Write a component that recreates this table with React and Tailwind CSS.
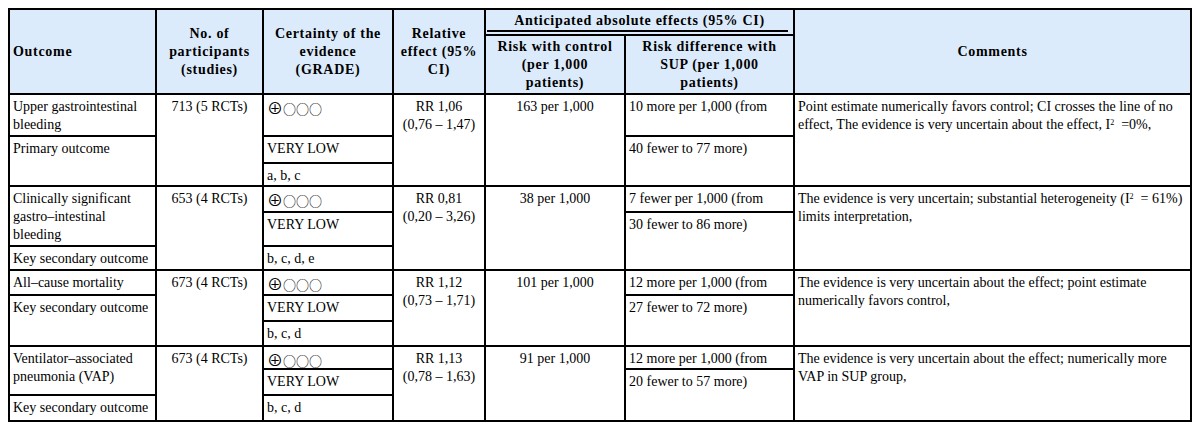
import React from "react"

const head = "bg-[#dcebfb] font-bold text-[14px] tracking-[0.7px] leading-[18px] flex items-center"
const body = "bg-white text-[14px] leading-[18px] px-[3px] pt-[3px] whitespace-nowrap"
const grade = "font-['Noto_Sans_CJK_KR','DejaVu_Sans',sans-serif] text-[13px] leading-[18px]"

const groups = [
  {
    outcome: ["Upper gastrointestinal", "bleeding"],
    topSpan: 1,
    role: "Primary outcome",
    n: "713 (5 RCTs)",
    cert: "a, b, c",
    rr: ["RR 1,06", "(0,76 – 1,47)"],
    ctrl: "163 per 1,000",
    diff: ["10 more per 1,000 (from", "40 fewer to 77 more)"],
    comment: [
      "Point estimate numerically favors control; CI crosses the line of no",
      <>effect, The evidence is very uncertain about the effect, I<sup className="text-[8px]">2</sup>&nbsp;&nbsp;=0%,</>,
    ],
  },
  {
    outcome: ["Clinically significant", "gastro–intestinal", "bleeding"],
    topSpan: 2,
    role: "Key secondary outcome",
    n: "653 (4 RCTs)",
    cert: "b, c, d, e",
    rr: ["RR 0,81", "(0,20 – 3,26)"],
    ctrl: "38 per 1,000",
    diff: ["7 fewer per 1,000 (from", "30 fewer to 86 more)"],
    comment: [
      <>The evidence is very uncertain; substantial heterogeneity (I<sup className="text-[8px]">2</sup>&nbsp;&nbsp;= 61%)</>,
      "limits interpretation,",
    ],
  },
  {
    outcome: ["All–cause mortality"],
    topSpan: 1,
    role: "Key secondary outcome",
    n: "673 (4 RCTs)",
    cert: "b, c, d",
    rr: ["RR 1,12", "(0,73 – 1,71)"],
    ctrl: "101 per 1,000",
    diff: ["12 more per 1,000 (from", "27 fewer to 72 more)"],
    comment: [
      "The evidence is very uncertain about the effect; point estimate",
      "numerically favors control,",
    ],
  },
  {
    outcome: ["Ventilator–associated", "pneumonia (VAP)"],
    topSpan: 2,
    role: "Key secondary outcome",
    n: "673 (4 RCTs)",
    cert: "b, c, d",
    rr: ["RR 1,13", "(0,78 – 1,63)"],
    ctrl: "91 per 1,000",
    diff: ["12 more per 1,000 (from", "20 fewer to 57 more)"],
    comment: [
      "The evidence is very uncertain about the effect; numerically more",
      "VAP in SUP group,",
    ],
  },
]

function Lines({ items }) {
  return items.map((t, i) => <div key={i}>{t}</div>)
}

function Grade() {
  return (
    <span className={grade}>
      <span className="text-[16px] leading-[18px]">⊕</span>○○○
    </span>
  )
}

function Group({ g }) {
  const two = g.topSpan === 2
  return (
    <>
      {/* first sub-row */}
      <div className={`${body} ${two ? "row-span-2" : ""}`}>
        <Lines items={g.outcome} />
      </div>
      <div className={`${body} row-span-3 text-center`}>{g.n}</div>
      <div className={body}>
        <Grade />
      </div>
      <div className={`${body} row-span-3 text-center`}>
        <Lines items={g.rr} />
      </div>
      <div className={`${body} row-span-3 text-center`}>{g.ctrl}</div>
      <div className={body}>{g.diff[0]}</div>
      <div className={`${body} row-span-3`}>
        <Lines items={g.comment} />
      </div>
      {/* second sub-row */}
      {!two && <div className={`${body} row-span-2`}>{g.role}</div>}
      <div className={body}>VERY LOW</div>
      <div className={`${body} row-span-2`}>{g.diff[1]}</div>
      {/* third sub-row */}
      {two && <div className={body}>{g.role}</div>}
      <div className={body}>{g.cert}</div>
    </>
  )
}

export default function App() {
  return (
    <div className="min-h-[430px] bg-white pt-[8px] pl-[8px] font-['Liberation_Serif',serif] text-black">
      <div className="grid w-fit bg-black p-[2px] gap-[2px] grid-cols-[145px_105px_128px_90px_138px_167px_395px] grid-rows-[24px_57px_40px_25px_21px_24px_32px_22px_23px_24px_23px_21px_24px_24px]">
        <div className={`${head} row-span-2 pl-[3px]`}>Outcome</div>
        <div className={`${head} row-span-2 justify-center text-center`}>
          No. of<br />participants<br />(studies)
        </div>
        <div className={`${head} row-span-2 justify-center text-center`}>
          Certainty of the<br />evidence<br />(GRADE)
        </div>
        <div className={`${head} row-span-2 justify-center text-center`}>
          Relative<br />effect (95%<br />CI)
        </div>
        <div className="bg-[#dcebfb] col-span-2 flex flex-col font-bold text-[14px] tracking-[0.7px] leading-[18px]">
          <div className="text-center pt-[2px]">Anticipated absolute effects (95% CI)</div>
          <div className="mt-auto mb-[2px] ml-[1px] mr-[5px] h-[2px] bg-black" />
        </div>
        <div className={`${head} row-span-2 justify-center`}>Comments</div>
        <div className={`${head} justify-center text-center`}>
          Risk with control<br />(per 1,000<br />patients)
        </div>
        <div className={`${head} justify-center text-center`}>
          Risk difference with<br />SUP (per 1,000<br />patients)
        </div>
        {groups.map((g, i) => (
          <Group key={i} g={g} />
        ))}
      </div>
    </div>
  )
}
